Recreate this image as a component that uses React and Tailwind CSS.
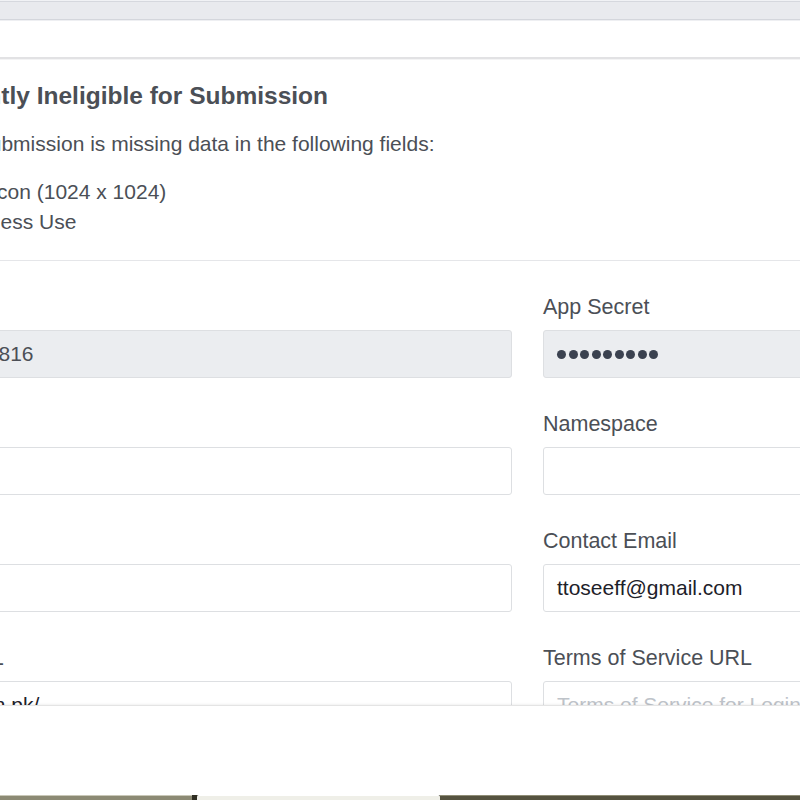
import React from "react";

const leftFields = [
  { label: "App ID", value: "10281773019448816", disabled: true },
  { label: "Display Name", value: "" },
  { label: "App Domains", value: "" },
  { label: "Privacy Policy URL", value: "http://www.hassan.pk/" },
];

const rightFields = [
  { label: "App Secret", secret: true, disabled: true },
  { label: "Namespace", value: "" },
  { label: "Contact Email", value: "ttoseeff@gmail.com" },
  { label: "Terms of Service URL", placeholder: "Terms of Service for Login Dialog and Policies" },
];

const Field = ({ field, last }) => (
  <div className={last ? "" : "mb-[34px]"}>
    <div className="h-[24px] whitespace-nowrap text-[21.5px] leading-[24px] text-[#4b4f56]">
      {field.label}
    </div>
    <div
      className={`mt-[11px] flex h-[48px] items-center overflow-hidden whitespace-nowrap rounded-[3px] border border-[#dddfe2] px-[13px] text-[21px] ${
        field.disabled ? "bg-[#ebedf0] text-[#4b4f56]" : "bg-white text-[#1d2129]"
      }`}
    >
      {field.secret ? (
        <div className="flex gap-[2.5px]">
          {Array.from({ length: 9 }).map((_, i) => (
            <span key={i} className="h-[9px] w-[9px] rounded-full bg-[#3b4250]" />
          ))}
        </div>
      ) : field.value ? (
        field.value
      ) : (
        <span className="text-[#bec3c9]">{field.placeholder}</span>
      )}
    </div>
  </div>
);

export default function App() {
  return (
    <div className="relative h-[800px] w-[800px] overflow-hidden bg-white font-['Liberation_Sans',Arial,sans-serif]">
      {/* top nav band */}
      <div className="h-[1px] bg-[#f1f2f5]" />
      <div className="h-[1px] bg-[#d6d8de]" />
      <div className="h-[17px] bg-[#e9eaee]" />
      <div className="h-[1px] bg-[#d4d6dc]" />
      <div className="h-[1px] bg-[#eeeff2]" />
      <div className="h-[36px] bg-white" />
      <div className="h-[2px] bg-[#e2e2e4]" />
      <div className="h-[1px] bg-[#f4f4f5]" />

      {/* notice */}
      <div className="ml-[-79px] whitespace-nowrap pt-[21px]">
        <h2 className="text-[24.5px] font-bold leading-[30px] text-[#4b4f56]">
          Currently Ineligible for Submission
        </h2>
        <p className="mt-[18px] ml-[10px] text-[21px] leading-[30px] text-[#4b4f56]">
          Your submission is missing data in the following fields:
        </p>
        <ul className="mt-[18px] ml-[27px] text-[21px] leading-[30px] text-[#4b4f56]">
          <li>App Icon (1024 x 1024)</li>
          <li>Business Use</li>
        </ul>
      </div>

      <div className="mt-[23px] h-[1px] bg-[#e5e6e9]" />

      {/* form */}
      <div className="ml-[-179px] grid w-[1413px] grid-cols-2 gap-x-[31px] pt-[34px]">
        <div>
          {leftFields.map((f, i) => (
            <Field key={f.label} field={f} last={i === leftFields.length - 1} />
          ))}
        </div>
        <div>
          {rightFields.map((f, i) => (
            <Field key={f.label} field={f} last={i === rightFields.length - 1} />
          ))}
        </div>
      </div>

      {/* sticky save bar overlay */}
      <div className="absolute left-0 right-0 top-[705px] h-[90px] border-t border-[#e4e4e4] bg-white shadow-[0_-1px_2px_rgba(0,0,0,0.06)]" />

      {/* OS taskbar strip */}
      <div className="absolute bottom-0 left-0 right-0 flex h-[5px] bg-[#4f4d3a]">
        <div className="w-[192px] border-t border-[#c9c8b8] bg-[#8c8a74]" />
        <div className="w-[5px] bg-[#2f2e22]" />
        <div className="w-[243px] rounded-t-[2px] border-t border-[#ffffff] bg-[#efefe8]" />
        <div className="flex-1 border-t border-[#8f8d76] bg-[#55533f]" />
      </div>
    </div>
  );
}
